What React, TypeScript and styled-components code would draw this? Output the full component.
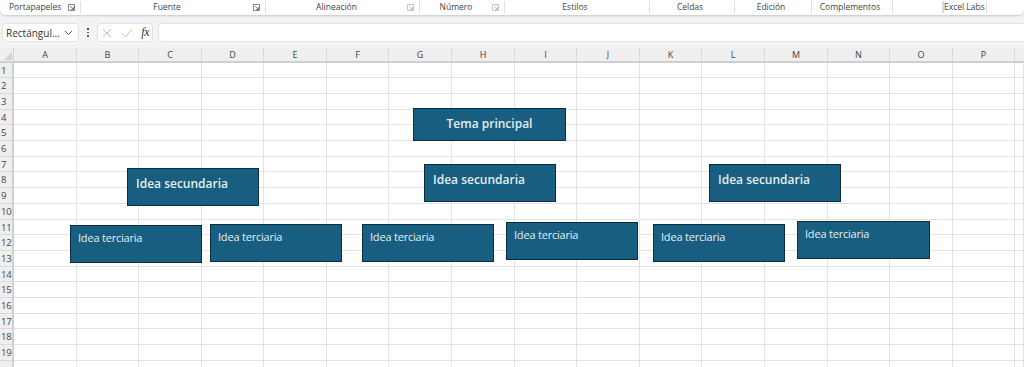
import styled, { createGlobalStyle } from "styled-components";

const GlobalStyle = createGlobalStyle`
  html, body {
    margin: 0;
    padding: 0;
    background: #f3f3f3;
    overflow: hidden;
  }
  body {
    font-family: "Open Sans", "Liberation Sans", sans-serif;
  }
`;

const groups = [
  { label: "Portapapeles", width: 81, launcher: true, align: "left" },
  { label: "Fuente", width: 185, launcher: true },
  { label: "Alineación", width: 154, launcher: true, dim: true },
  { label: "Número", width: 85, launcher: true, dim: true },
  { label: "Estilos", width: 145 },
  { label: "Celdas", width: 85 },
  { label: "Edición", width: 77 },
  { label: "Complementos", width: 81 },
  { label: "", width: 50 },
  { label: "Excel Labs", width: 44 },
];

const colWidths = [63, 62, 63, 62, 63, 62, 63, 63, 62, 63, 62, 63, 63, 62, 63, 62];
const rowHeights = [15, 16, 16, 15, 16, 16, 15, 16, 16, 16, 15, 16, 16, 15, 16, 16, 15, 16, 16, 16];
const letters = "ABCDEFGHIJKLMNOP".split("");

// shapes drawn on the sheet, positions relative to the sheet's top-left
const shapes = [
  { text: "Tema principal", x: 413, y: 60, w: 153, h: 33, kind: "main" },
  { text: "Idea secundaria", x: 127, y: 120, w: 132, h: 38, kind: "second" },
  { text: "Idea secundaria", x: 424, y: 116, w: 132, h: 38, kind: "second" },
  { text: "Idea secundaria", x: 709, y: 116, w: 132, h: 38, kind: "second" },
  { text: "Idea terciaria", x: 70, y: 177, w: 132, h: 38, kind: "third" },
  { text: "Idea terciaria", x: 210, y: 176, w: 132, h: 38, kind: "third" },
  { text: "Idea terciaria", x: 362, y: 176, w: 132, h: 38, kind: "third" },
  { text: "Idea terciaria", x: 506, y: 174, w: 132, h: 38, kind: "third" },
  { text: "Idea terciaria", x: 653, y: 176, w: 132, h: 38, kind: "third" },
  { text: "Idea terciaria", x: 797, y: 173, w: 133, h: 38, kind: "third" },
];

const Launcher = ({ dim }: { dim?: boolean }) => (
  <svg width="7" height="7" viewBox="0 0 7 7">
    <path
      d="M0.5 0.5h6v6M0.5 0.5v6h6M2 2l3.5 3.5M5.5 3v2.5H3"
      fill="none"
      stroke={dim ? "#b8b8b8" : "#666"}
      strokeWidth="0.8"
    />
  </svg>
);

export default function App() {
  return (
    <>
      <GlobalStyle />
      <Ribbon>
        {groups.map((g, i) => (
          <Group key={i} $w={g.width}>
            <GroupLabel $left={g.align === "left"}>{g.label}</GroupLabel>
            {g.launcher && (
              <LauncherBox>
                <Launcher dim={g.dim} />
              </LauncherBox>
            )}
          </Group>
        ))}
      </Ribbon>
      <FormulaRow>
        <NameBox>
          <span>Rectángul...</span>
          <svg width="9" height="6" viewBox="0 0 9 6">
            <path d="M1 1l3.5 3.5L8 1" fill="none" stroke="#555" strokeWidth="1" />
          </svg>
        </NameBox>
        <Dots>
          <i />
          <i />
          <i />
        </Dots>
        <FxBox>
          <svg width="10" height="10" viewBox="0 0 10 10">
            <path d="M1 1l8 8M9 1l-8 8" stroke="#bdbdbd" strokeWidth="1" />
          </svg>
          <svg width="12" height="10" viewBox="0 0 12 10">
            <path d="M1 5.5l3.5 3.5L11 1" fill="none" stroke="#bdbdbd" strokeWidth="1" />
          </svg>
          <FxText>fx</FxText>
        </FxBox>
        <FormulaInput />
      </FormulaRow>
      <Sheet>
        <Grid $cols={colWidths} $rows={rowHeights}>
          <Corner />
          {letters.map((l) => (
            <ColHead key={l}>{l}</ColHead>
          ))}
          <ColHead $rest />
          {rowHeights.map((_, r) => (
            <Row key={r}>
              {/* the last row is cut by the window edge, its number is not seen */}
              <RowHead>{r < 19 ? r + 1 : ""}</RowHead>
              {colWidths.map((__, c) => (
                <Cell key={c} />
              ))}
              <Cell />
            </Row>
          ))}
        </Grid>
        {shapes.map((s, i) => (
          <Shape
            key={i}
            $kind={s.kind}
            style={{ left: s.x, top: s.y, width: s.w, height: s.h }}
          >
            {s.text}
          </Shape>
        ))}
      </Sheet>
    </>
  );
}

const Ribbon = styled.div`
  height: 15px;
  background: #ffffff;
  border-radius: 0 0 6px 6px;
  box-shadow: 0 1px 2px rgba(0, 0, 0, 0.18);
  display: flex;
  align-items: flex-start;
  position: relative;
  z-index: 1;
`;

const Group = styled.div<{ $w: number }>`
  width: ${(p) => p.$w}px;
  height: 12px;
  display: flex;
  align-items: center;
  border-right: 1px solid #dcdcdc;
  box-sizing: border-box;
  padding-right: 4px;
  margin-top: 1px;

  &:last-child {
    border-left: 1px solid #dcdcdc;
  }
`;

const GroupLabel = styled.span<{ $left?: boolean }>`
  flex: 1;
  font-size: 8.5px;
  color: #444;
  white-space: nowrap;
  text-align: ${(p) => (p.$left ? "left" : "center")};
  padding-left: ${(p) => (p.$left ? "9px" : "0")};
  line-height: 12px;
`;

const LauncherBox = styled.span`
  display: flex;
  align-items: center;
  margin-right: 1px;
`;

const FormulaRow = styled.div`
  height: 33px;
  display: flex;
  align-items: center;
  padding: 2px 0 0 2px;
  box-sizing: border-box;
`;

const NameBox = styled.div`
  width: 77px;
  height: 19px;
  box-sizing: border-box;
  background: #fff;
  border: 1px solid #e2e2e2;
  border-radius: 4px;
  display: flex;
  align-items: center;
  justify-content: space-between;
  padding: 0 5px 0 3px;
  font-size: 10px;
  color: #333;
`;

const Dots = styled.div`
  width: 18px;
  display: flex;
  flex-direction: column;
  align-items: center;
  gap: 2px;

  > i {
    width: 1.5px;
    height: 1.5px;
    background: #555;
    display: block;
  }
`;

const FxBox = styled.div`
  width: 56px;
  height: 19px;
  box-sizing: border-box;
  background: #fff;
  border: 1px solid #e2e2e2;
  border-radius: 4px;
  display: flex;
  align-items: center;
  justify-content: space-between;
  padding: 0 3px 0 4px;
`;

const FxText = styled.span`
  font-family: "Liberation Serif", serif;
  font-style: italic;
  font-size: 12px;
  color: #333;
  letter-spacing: -0.5px;
`;

const FormulaInput = styled.div`
  flex: 1;
  height: 19px;
  margin-left: 5px;
  background: #fff;
  border: 1px solid #e2e2e2;
  border-right: none;
  border-radius: 4px 0 0 4px;
  box-sizing: border-box;
`;

const Sheet = styled.div`
  position: relative;
  background: #fff;
`;

const Grid = styled.div<{ $cols: number[]; $rows: number[] }>`
  display: grid;
  grid-template-columns: 14px ${(p) => p.$cols.map((c) => `${c}px`).join(" ")} 1fr;
  grid-template-rows: 15px ${(p) => p.$rows.map((r) => `${r}px`).join(" ")};
`;

const Corner = styled.div`
  background: #efefef;
  border-bottom: 2px solid #cfcfcf;
  border-right: 1px solid #cfcfcf;
  box-sizing: border-box;
  position: relative;

  &::after {
    content: "";
    position: absolute;
    right: 1px;
    bottom: 1px;
    border-left: 8px solid transparent;
    border-bottom: 8px solid #d4d4d4;
  }
`;

const ColHead = styled.div<{ $rest?: boolean }>`
  background: #efefef;
  border-bottom: 2px solid #cfcfcf;
  border-right: ${(p) => (p.$rest ? "none" : "1px solid #dadada")};
  box-sizing: border-box;
  font-size: 9px;
  color: #444;
  display: flex;
  align-items: center;
  justify-content: center;
`;

const Row = styled.div`
  display: contents;
`;

const RowHead = styled.div`
  background: #efefef;
  border-right: 2px solid #cfcfcf;
  border-bottom: 1px solid #dadada;
  box-sizing: border-box;
  font-size: 9.5px;
  color: #444;
  display: flex;
  align-items: center;
  padding-left: 1px;
  letter-spacing: -0.3px;
`;

const Cell = styled.div`
  border-right: 1px solid #e3e3e3;
  border-bottom: 1px solid #e3e3e3;
  box-sizing: border-box;
  background: #fff;
`;

const Shape = styled.div<{ $kind: string }>`
  position: absolute;
  box-sizing: border-box;
  background: #185e80;
  border: 1.5px solid #0b2d3f;
  color: #e4edf2;
  font-family: "Open Sans", "Liberation Sans", sans-serif;
  white-space: nowrap;
  display: flex;
  ${(p) =>
    p.$kind === "main"
      ? `
    justify-content: center;
    align-items: center;
    padding-bottom: 3px;
    font-size: 12px;
    font-weight: 600;
  `
      : p.$kind === "second"
      ? `
    align-items: flex-start;
    padding: 6px 0 0 8px;
    font-size: 12px;
    font-weight: 600;
  `
      : `
    align-items: flex-start;
    padding: 4px 0 0 7px;
    font-size: 11px;
    letter-spacing: -0.2px;
  `}
`;
